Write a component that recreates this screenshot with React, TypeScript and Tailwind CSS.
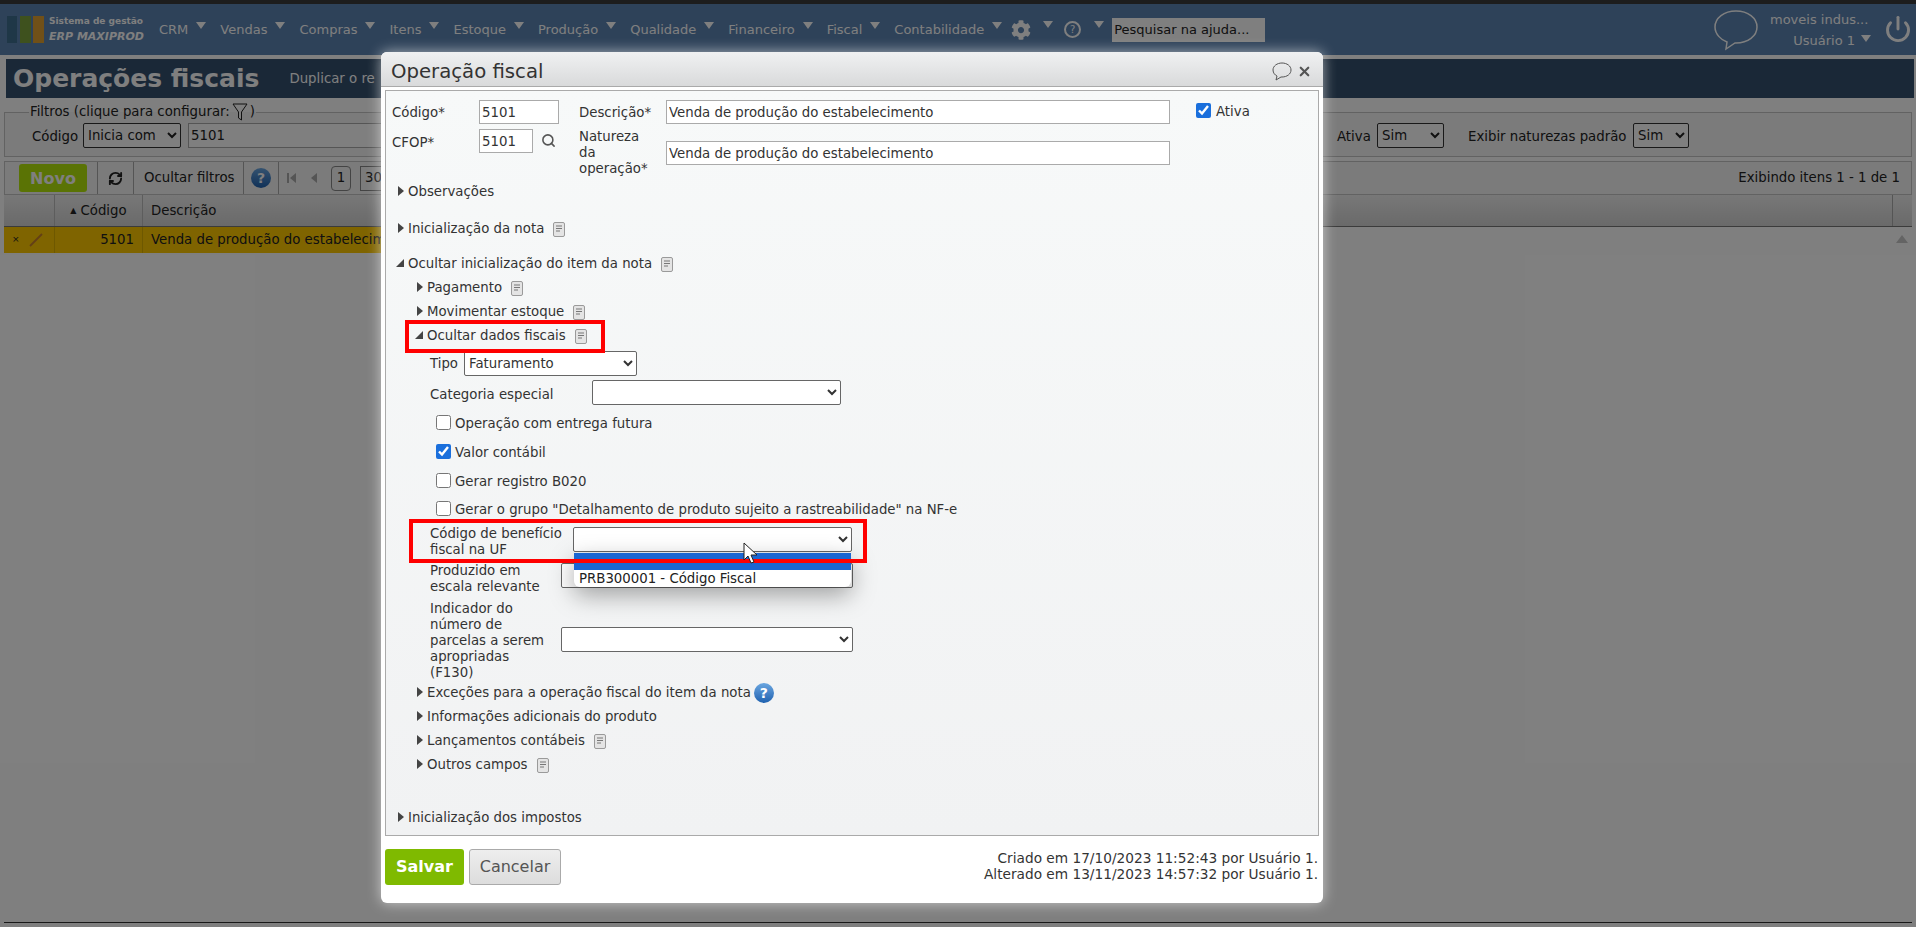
import React from 'react';
import { RefreshCw, Search, Power, X } from 'lucide-react';
import { FaCog } from 'react-icons/fa';

const nav = ['CRM', 'Vendas', 'Compras', 'Itens', 'Estoque', 'Produção', 'Qualidade', 'Financeiro', 'Fiscal', 'Contabilidade'];

function Caret({ className = '' }: { className?: string }) {
  return <span className={`w-0 h-0 border-x-[5px] border-x-transparent border-t-[7px] border-t-white ${className}`} />;
}

function Note() {
  return (
    <svg width="12" height="15" viewBox="0 0 12 15" className="shrink-0">
      <rect x="0.5" y="0.5" width="11" height="14" rx="1.5" fill="#e4e4e4" stroke="#9a9a9a" />
      <path d="M3 4h6M3 6.5h6M3 9h4" stroke="#777" strokeWidth="1" />
    </svg>
  );
}

function HelpIcon({ size = 20 }: { size?: number }) {
  return (
    <span
      style={{ width: size, height: size, fontSize: size - 6 }}
      className="rounded-full bg-gradient-to-b from-[#6aa6e0] to-[#1f62b0] text-white font-bold flex items-center justify-center shrink-0"
    >
      ?
    </span>
  );
}

function Section({ label, open, note, help, className = '' }: { label: string; open?: boolean; note?: boolean; help?: boolean; className?: string }) {
  return (
    <div className={`h-6 flex items-center ${className}`}>
      <svg width="12" height="12" viewBox="0 0 12 12" className="shrink-0 -mt-0.5">
        {open ? <path d="M1 10h8V2z" fill="#444" /> : <path d="M3 1l6 5-6 5z" fill="#444" />}
      </svg>
      <span className="ml-px">{label}</span>
      {note && <span className="ml-[9px]"><Note /></span>}
      {help && <span className="ml-[3px]"><HelpIcon /></span>}
    </div>
  );
}

function Checkline({ label, checked, className = '' }: { label: string; checked?: boolean; className?: string }) {
  return (
    <label className={`h-6 flex items-center ml-[41px] ${className}`}>
      <input type="checkbox" checked={!!checked} readOnly className="w-[15px] h-[15px] m-0 accent-[#1a6fdc] -mt-[3px]" />
      <span className="ml-1">{label}</span>
    </label>
  );
}

function PageBehind() {
  return (
    <div className="h-[927px] flex flex-col bg-white overflow-hidden">
      <div className="h-1 bg-[#3a3a3a]" />
      <header className="h-[51px] bg-[#5c84b2] flex items-center text-white text-[13px] shrink-0">
        <svg width="37" height="27" viewBox="0 0 37 27" className="ml-[7px]">
          <rect width="10" height="27" fill="#3f6f8f" />
          <rect x="13" width="11" height="27" fill="#7da23c" />
          <rect x="26" width="11" height="27" fill="#e0a030" />
        </svg>
        <div className="ml-[5px] w-[110px] leading-[15px] -mt-0.5">
          <div className="text-[9px] font-bold">Sistema de gestão</div>
          <div className="text-[11px] font-bold italic">ERP MAXIPROD</div>
        </div>
        <nav className="flex items-center gap-[14px]">
          {nav.map((n) => (
            <span key={n} className="flex items-center gap-2">
              {n}
              <Caret className="-mt-2" />
            </span>
          ))}
        </nav>
        <FaCog size={20} className="ml-[9px]" />
        <Caret className="ml-[12px] -mt-2.5" />
        <span className="ml-[11px] w-[17px] h-[17px] rounded-full border-2 border-white text-[10px] flex items-center justify-center">?</span>
        <Caret className="ml-[13px] -mt-2.5" />
        <div className="ml-2 w-[153px] h-6 bg-white text-[#222] flex items-center pl-[2px]">Pesquisar na ajuda...</div>
        <svg width="46" height="42" viewBox="0 0 46 42" fill="none" stroke="white" strokeWidth="1.5" className="ml-auto">
          <path d="M23 2C11 2 2 9 2 18c0 7 6 13 12 15l-1 7 9-6h1c12 0 21-7 21-16S35 2 23 2z" />
        </svg>
        <div className="w-[111px] ml-[11px] leading-[21px]">
          <div>moveis indus...</div>
          <div className="text-right pr-[10px] flex items-center justify-end gap-[6px]">
            Usuário 1 <Caret className="-mt-1" />
          </div>
        </div>
        <Power size={28} strokeWidth={2.5} className="ml-[3px] mr-[4px] -mt-[2px]" />
      </header>

      <div className="ml-1.5 mr-0.5 mt-1 h-[39px] bg-[#34506f] flex items-center text-white shrink-0">
        <h1 className="ml-[7px] text-[25px] font-bold">Operações fiscais</h1>
        <span className="ml-[30px] text-[13.3px]">Duplicar o re</span>
      </div>

      <fieldset className="mx-1 mt-[6px] h-[53px] border border-[#c4c4c4] bg-[#f6f6f6] px-[24px] text-[13.3px] text-[#222] shrink-0">
        <legend className="px-[1px] h-4 leading-4 flex items-center mt-px">
          Filtros (clique para configurar:
          <svg width="16" height="18" viewBox="0 0 16 18" fill="white" stroke="#222" className="mx-[2px]"><path d="M1 1h14L9.5 9v8L6.5 15V9z" /></svg>)
        </legend>
        <div className="flex items-center mt-[3px] h-[25px] ml-[3px] whitespace-nowrap">
          <span className="w-[45px] mt-[3px]">Código</span>
          <select className="ml-[6px] w-[98px] h-[25px] border border-[#333] rounded-[2px] bg-white"><option>Inicia com</option></select>
          <input readOnly value="5101" className="ml-[7px] w-[210px] h-[25px] border border-[#aaa] bg-white px-[2px]" />
          <span className="ml-[939px] w-[33px] mt-[3px]">Ativa</span>
          <select className="ml-[7px] w-[67px] h-[25px] border border-[#333] rounded-[2px] bg-white"><option>Sim</option></select>
          <span className="ml-6 w-[159px] mt-[3px]">Exibir naturezas padrão</span>
          <select className="ml-[6px] w-[56px] h-[25px] border border-[#333] rounded-[2px] bg-white"><option>Sim</option></select>
        </div>
      </fieldset>

      <div className="mx-1 mt-1 h-[34px] border border-[#c4c4c4] bg-[#f6f6f6] flex items-center text-[13.3px] text-[#222] shrink-0">
        <button className="ml-[14px] w-[68px] h-7 rounded-[3px] bg-[#b4e60a] text-white font-bold text-[16px] pt-px">Novo</button>
        <span className="ml-[10px] w-[37px] h-full border-x border-[#aaa] flex items-center justify-center">
          <RefreshCw size={15} strokeWidth={3} />
        </span>
        <span className="w-[109px] h-full flex items-center pl-[10px] whitespace-nowrap">Ocultar filtros</span>
        <span className="w-[36px] h-full border-x border-[#aaa] flex items-center justify-center"><HelpIcon /></span>
        <svg width="9" height="12" viewBox="0 0 9 12" fill="#aaa" className="ml-[8px]"><path d="M0 1h2v10H0zM9 1v10L3 6z" /></svg>
        <svg width="6" height="12" viewBox="0 0 6 12" fill="#aaa" className="ml-[15px]"><path d="M6 1v10L0 6z" /></svg>
        <span className="ml-[14px] w-5 h-[25px] border border-[#888] rounded-[4px] flex items-center justify-center">1</span>
        <span className="ml-[9px] w-8 h-[25px] border border-[#888] flex items-center pl-1">30</span>
        <span className="ml-auto mr-[11px]">Exibindo itens 1 - 1 de 1</span>
      </div>

      <div className="mx-1 h-[32px] bg-gradient-to-b from-[#f0f0f0] to-[#d4d4d4] border-b border-[#777] flex items-center text-[13.3px] text-[#222] shrink-0">
        <span className="w-[51px] h-full border-r border-[#bbb]" />
        <span className="w-[88px] h-full border-r border-[#bbb] flex items-center justify-center gap-1"><span className="text-[8px]">▲</span> Código</span>
        <span className="ml-2">Descrição</span>
        <span className="ml-auto mr-[19px] h-full border-l border-[#aaa]" />
      </div>

      <div className="flex justify-between shrink-0">
        <div className="ml-1 w-[1000px] h-[26px] bg-[#ffc800] flex items-center text-[13.3px] text-[#222]">
          <span className="w-[51px] h-full border-r border-[#ddb000] flex items-center pl-2 gap-2 text-[9px]">
            ×
            <svg width="16" height="16" viewBox="0 0 16 16" stroke="#c9812b" strokeWidth="2"><path d="M2 14L14 2" /></svg>
          </span>
          <span className="w-[88px] h-full border-r border-[#ddb000] flex items-center justify-end pr-2">5101</span>
          <span className="ml-2 whitespace-nowrap">Venda de produção do estabelecimento</span>
        </div>
        <svg width="12" height="8" viewBox="0 0 12 8" fill="#c8c8c8" className="mr-[8px] mt-[8px]"><path d="M6 0l6 8H0z" /></svg>
      </div>
      <div className="flex-1 mx-1 mb-[4px] border-b border-[#333]" />
    </div>
  );
}

function ModalForm() {
  const inputCls = 'h-6 border border-[#aaa] bg-white px-[2px] text-[13.3px]';
  const selCls = 'h-[25px] border border-[#666] rounded-[2px] bg-white text-[13.3px]';
  return (
    <div className="h-[746px] border border-[#aaa] bg-gradient-to-b from-[#f7f9f9] to-[#f1f2f3] text-[13.3px] text-[#333] leading-4 pl-[9px] whitespace-nowrap">
      <div className="pt-[9px]">
        <div className="flex items-center h-6">
          <span className="w-[87px] -ml-[3px] mt-[2px]">Código*</span>
          <input readOnly value="5101" className={`${inputCls} w-[80px]`} />
          <span className="ml-5 w-[87px] mt-[2px]">Descrição*</span>
          <input readOnly value="Venda de produção do estabelecimento" className={`${inputCls} w-[504px]`} />
          <label className="ml-[26px] flex items-center gap-[5px]">
            <input type="checkbox" checked readOnly className="w-[15px] h-[15px] m-0 accent-[#1a6fdc] -mt-[3px]" /> Ativa
          </label>
        </div>
        <div className="flex items-start mt-[5px] h-[50px]">
          <span className="w-[87px] -ml-[3px] mt-1.5">CFOP*</span>
          <input readOnly value="5101" className={`${inputCls} w-[54px]`} />
          <Search size={15} strokeWidth={2.5} className="ml-2 mt-[4px] text-[#555]" />
          <span className="ml-[23px] w-[87px]">Natureza<br />da<br />operação*</span>
          <input readOnly value="Venda de produção do estabelecimento" className={`${inputCls} w-[504px] mt-3`} />
        </div>
      </div>
      <Section label="Observações" className="mt-px" />
      <Section label="Inicialização da nota" note className="mt-[13px]" />
      <Section label="Ocultar inicialização do item da nota" open note className="mt-[11px]" />
      <div className="ml-[19px]">
        <Section label="Pagamento" note />
        <Section label="Movimentar estoque" note />
        <Section label="Ocultar dados fiscais" open note />
      </div>
      <div className="flex items-center h-6 mt-[3px] ml-[35px]">
        <span className="w-[34px] mt-[2px]">Tipo</span>
        <select className={`${selCls} w-[173px]`}><option>Faturamento</option></select>
      </div>
      <div className="flex items-center h-6 mt-1.5 ml-[35px]">
        <span className="w-[162px] mt-[4px]">Categoria especial</span>
        <select className={`${selCls} w-[249px] -mt-[2px]`}><option></option></select>
      </div>
      <Checkline label="Operação com entrega futura" className="mt-[7px]" />
      <Checkline label="Valor contábil" checked className="mt-[5px]" />
      <Checkline label="Gerar registro B020" className="mt-[5px]" />
      <Checkline label={'Gerar o grupo "Detalhamento de produto sujeito a rastreabilidade" na NF-e'} className="mt-1" />
      <div className="flex items-center h-8 mt-1 ml-[35px]">
        <span className="w-[143px]">Código de benefício<br />fiscal na UF</span>
        <select className={`${selCls} w-[279px] -mt-[5px]`}><option></option></select>
      </div>
      <div className="flex items-center h-8 mt-[5px] ml-[35px]">
        <span className="w-[131px]">Produzido em<br />escala relevante</span>
        <select className={`${selCls} w-[292px] -mt-[8px]`}><option></option></select>
      </div>
      <div className="flex items-center h-20 mt-1.5 ml-[35px]">
        <span className="w-[131px]">Indicador do<br />número de<br />parcelas a serem<br />apropriadas<br />(F130)</span>
        <select className={`${selCls} w-[292px] -mt-[3px]`}><option></option></select>
      </div>
      <div className="ml-[19px]">
        <Section label="Exceções para a operação fiscal do item da nota" help />
        <Section label="Informações adicionais do produto" />
        <Section label="Lançamentos contábeis" note />
        <Section label="Outros campos" note />
      </div>
      <Section label="Inicialização dos impostos" className="mt-[29px]" />
    </div>
  );
}

export default function App() {
  return (
    <div className="relative h-[927px] w-[1916px] overflow-hidden font-['DejaVu_Sans',sans-serif]">
      <PageBehind />
      <div className="absolute inset-0 bg-black/50" />

      {/* modal */}
      <div className="absolute left-[381px] top-[52px] w-[942px] h-[851px] rounded-[6px] bg-white shadow-[0_0_14px_rgba(255,255,255,0.6)]">
        <div className="h-[35px] pt-[5px] rounded-t-[6px] bg-gradient-to-b from-[#f0f1f2] to-[#d9dadb] border-b border-[#aaa] flex items-center pl-[10px] pr-[11px] text-[#333]">
          <h2 className="text-[19.7px]">Operação fiscal</h2>
          <svg width="20" height="19" viewBox="0 0 20 19" fill="none" stroke="#555" className="ml-auto">
            <path d="M10 1C5 1 1 4 1 8c0 3 2 5 4 6l-1 4 5-3h1c5 0 9-3 9-7s-4-7-9-7z" />
          </svg>
          <X size={15} strokeWidth={3.5} className="ml-[5px] text-[#555]" />
        </div>
        <div className="mt-[3px] ml-[4px] w-[934px]">
          <ModalForm />
        </div>
        <div className="flex items-start justify-between pl-[4px] pr-[5px] pt-[13px] text-[13.7px] text-[#333]">
          <div className="flex gap-[5px]">
            <button className="w-[79px] h-[36px] rounded-[3px] bg-[#7fba00] text-white font-bold text-[16px]">Salvar</button>
            <button className="w-[92px] h-[36px] rounded-[3px] border border-[#aaa] bg-gradient-to-b from-[#eee] to-[#ddd] text-[#555] text-[16px]">Cancelar</button>
          </div>
          <div className="text-right leading-4 pt-[1px]">
            Criado em 17/10/2023 11:52:43 por Usuário 1.<br />
            Alterado em 13/11/2023 14:57:32 por Usuário 1.
          </div>
        </div>
      </div>

      {/* open select list */}
      <div className="absolute left-[574px] top-[553px] w-[277px] h-[34px] rounded-b-[6px] overflow-hidden bg-white shadow-[0_8px_24px_rgba(0,0,0,0.35)] text-[13.3px] text-[#222]">
        <div className="h-[17px] bg-[#1a66d2]" />
        <div className="h-[17px] pl-[5px] leading-[17px]">PRB300001 - Código Fiscal</div>
      </div>

      {/* annotations */}
      <div className="absolute left-[405px] top-[320px] w-[200px] h-[33px] border-4 border-[#f00]" />
      <div className="absolute left-[409px] top-[519px] w-[458px] h-[44px] border-4 border-[#f00]" />

      {/* mouse cursor */}
      <svg width="16" height="24" viewBox="0 0 16 24" className="absolute left-[743px] top-[542px]">
        <path d="M1 1v17l4-4 3 7 3-1-3-7h6z" fill="white" stroke="#222" />
      </svg>
    </div>
  );
}
